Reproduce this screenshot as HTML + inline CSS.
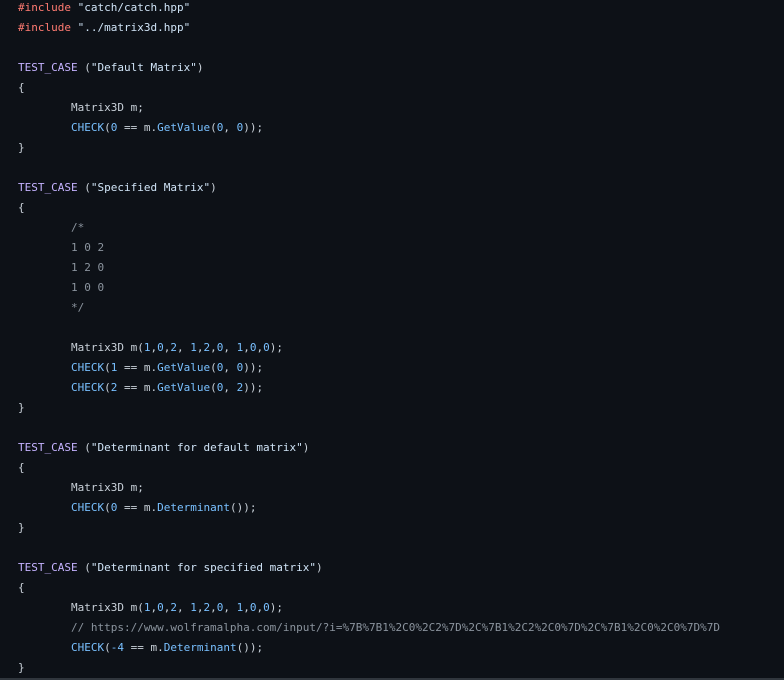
<!DOCTYPE html>
<html><head><meta charset="utf-8"><style>
html,body{margin:0;padding:0;background:#0d1117;width:784px;height:680px;overflow:hidden}
pre{margin:0;position:absolute;top:-2px;left:18px;font-family:"DejaVu Sans Mono","Liberation Mono",monospace;font-size:11px;line-height:20px;color:#c9d1d9;tab-size:8}
.k{color:#ff7b72}.s{color:#d0e4f7}.f{color:#c4b2ff}.b{color:#79c0ff}.c{color:#8b949e}
.bar{position:absolute;left:0;right:0;top:678px;height:2px;background:#30363d}
</style></head><body>
<pre><span class="k">#include</span> <span class="s">"catch/catch.hpp"</span>
<span class="k">#include</span> <span class="s">"../matrix3d.hpp"</span>

<span class="f">TEST_CASE</span> (<span class="s">"Default Matrix"</span>)
{
	Matrix3D m;
	<span class="b">CHECK</span>(<span class="b">0</span> == m.<span class="b">GetValue</span>(<span class="b">0</span>, <span class="b">0</span>));
}

<span class="f">TEST_CASE</span> (<span class="s">"Specified Matrix"</span>)
{
	<span class="c">/*
	1 0 2
	1 2 0
	1 0 0
	*/</span>

	Matrix3D m(<span class="b">1</span>,<span class="b">0</span>,<span class="b">2</span>, <span class="b">1</span>,<span class="b">2</span>,<span class="b">0</span>, <span class="b">1</span>,<span class="b">0</span>,<span class="b">0</span>);
	<span class="b">CHECK</span>(<span class="b">1</span> == m.<span class="b">GetValue</span>(<span class="b">0</span>, <span class="b">0</span>));
	<span class="b">CHECK</span>(<span class="b">2</span> == m.<span class="b">GetValue</span>(<span class="b">0</span>, <span class="b">2</span>));
}

<span class="f">TEST_CASE</span> (<span class="s">"Determinant for default matrix"</span>)
{
	Matrix3D m;
	<span class="b">CHECK</span>(<span class="b">0</span> == m.<span class="b">Determinant</span>());
}

<span class="f">TEST_CASE</span> (<span class="s">"Determinant for specified matrix"</span>)
{
	Matrix3D m(<span class="b">1</span>,<span class="b">0</span>,<span class="b">2</span>, <span class="b">1</span>,<span class="b">2</span>,<span class="b">0</span>, <span class="b">1</span>,<span class="b">0</span>,<span class="b">0</span>);
	<span class="c">// https://www.wolframalpha.com/input/?i=%7B%7B1%2C0%2C2%7D%2C%7B1%2C2%2C0%7D%2C%7B1%2C0%2C0%7D%7D</span>
	<span class="b">CHECK</span>(<span class="b">-4</span> == m.<span class="b">Determinant</span>());
}</pre>
<div class="bar"></div>
</body></html>
